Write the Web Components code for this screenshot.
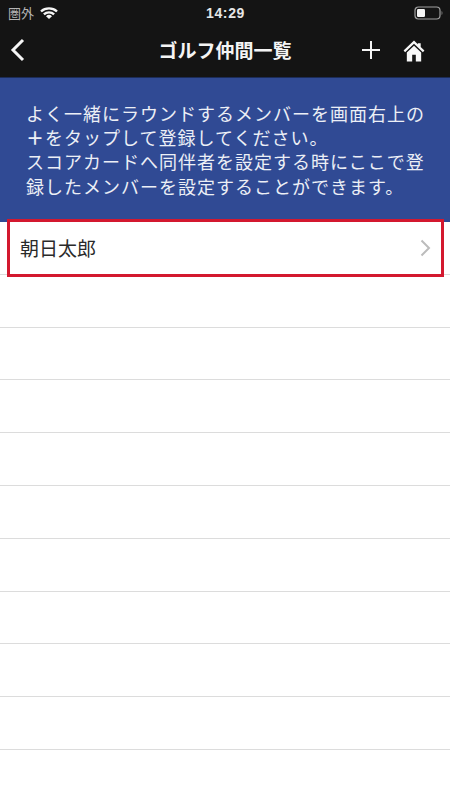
<!DOCTYPE html>
<html lang="ja">
<head>
<meta charset="utf-8">
<title>ゴルフ仲間一覧</title>
<style>
    html, body {
        margin: 0;
        background: #fff;
        font-family: "Liberation Sans", "Noto Sans CJK JP", sans-serif;
    }
    body {
        width: 450px;
        height: 800px;
        overflow: hidden;
    }
    app-screen { height: 800px; }
    info-banner b { font-weight: 700; }
</style>
</head>
<body>
<app-screen>
    <status-bar></status-bar>
    <nav-bar title="ゴルフ仲間一覧"></nav-bar>
    <info-banner>よく一緒にラウンドするメンバーを画面右上の<br><b>＋</b>をタップして登録してください。<br>スコアカードへ同伴者を設定する時にここで登<br>録したメンバーを設定することができます。</info-banner>
    <member-list>
        <member-row highlighted chevron>朝日太郎</member-row>
        <member-row></member-row>
        <member-row></member-row>
        <member-row></member-row>
        <member-row></member-row>
        <member-row></member-row>
        <member-row></member-row>
        <member-row></member-row>
        <member-row></member-row>
        <member-row></member-row>
    </member-list>
</app-screen>

<script>
class AppScreen extends HTMLElement {
    constructor() {
        super()
        this.attachShadow({ mode: 'open' })
        this.shadowRoot.innerHTML = `
            <style>
                :host {
                    display: flex;
                    flex-direction: column;
                    width: 450px;
                    overflow: hidden;
                }
            </style>
            <slot></slot>
        `
    }
}

class StatusBar extends HTMLElement {
    constructor() {
        super()
        this.attachShadow({ mode: 'open' })
        this.shadowRoot.innerHTML = `
            <style>
                :host {
                    display: grid;
                    grid-template-columns: 1fr auto 1fr;
                    align-items: center;
                    height: 25px;
                    padding: 0 7px 0 8px;
                    background: #141414;
                    color: #e8e8e8;
                    font-family: "Liberation Sans", "Noto Sans CJK JP", sans-serif;
                }
                .left { display: flex; align-items: center; gap: 6px; font-size: 13px; color: #b4b4b4; }
                .time { font-size: 14px; font-weight: 700; letter-spacing: .6px; color: #e6e6e6; }
                .right { justify-self: end; display: flex; }
            </style>
            <div class="left">
                <span>圏外</span>
                <svg width="18" height="12" viewBox="0 0 18 13" preserveAspectRatio="none">
                    <path d="M1 4.800a11.500 11.500 0 0 1 16 0" fill="none" stroke="#f6f6f6" stroke-width="2.400"/>
                    <path d="M3.900 8a7.300 7.300 0 0 1 10.200 0" fill="none" stroke="#f6f6f6" stroke-width="2.400"/>
                    <path d="M9 13 6 10a4.200 4.200 0 0 1 6 0z" fill="#f6f6f6"/>
                </svg>
            </div>
            <span class="time">14:29</span>
            <div class="right">
                <svg width="29" height="14" viewBox="0 0 29 14">
                    <rect x="1" y="1" width="25" height="12" rx="3.500" fill="none" stroke="#a0a0a0" stroke-width="1.200"/>
                    <rect x="3" y="3" width="8" height="8" rx="1.200" fill="#f4f4f4"/>
                    <path d="M27.500 5v4a2 2 0 0 0 1-2 2 2 0 0 0-1-2z" fill="#777"/>
                </svg>
            </div>
        `
    }
}

class NavBar extends HTMLElement {
    constructor() {
        super()
        this.attachShadow({ mode: 'open' })
        this.shadowRoot.innerHTML = `
            <style>
                :host {
                    display: grid;
                    grid-template-columns: 110px 1fr 110px;
                    align-items: center;
                    box-sizing: border-box;
                    height: 52px;
                    padding-bottom: 3px;
                    background: #141414;
                    color: #f4f4f4;
                    font-family: "Liberation Sans", "Noto Sans CJK JP", sans-serif;
                }
                h1 {
                    margin: 0;
                    font-size: 19px;
                    font-weight: 700;
                    text-align: center;
                    white-space: nowrap;
                }
                .back { padding-left: 9px; display: flex; }
                .actions { display: flex; align-items: center; justify-content: flex-end; gap: 23px; padding-right: 25px; }
                .home { margin-top: 2px; }
                svg { display: block; }
            </style>
            <div class="back">
                <svg width="16" height="24" viewBox="0 0 16 24">
                    <path d="M14 2 4 12l10 10" fill="none" stroke="#f6f6f6" stroke-width="3"/>
                </svg>
            </div>
            <h1></h1>
            <div class="actions">
                <svg width="18" height="18" viewBox="0 0 18 18">
                    <path d="M9 0v18M0 9h18" stroke="#f6f6f6" stroke-width="2"/>
                </svg>
                <svg class="home" width="22" height="22" viewBox="0 0 23 22">
                    <path d="M11.500 0 .6 10.600l1.600 1.600 9.300-8.800 9.300 8.800 1.600-1.600L18.500 6.800V3h-3v1z" fill="#f8f8f8"/>
                    <path d="M11.500 5.600 4 12.600V22h5.600v-7h3.800v7H19v-9.400z" fill="#f8f8f8"/>
                </svg>
            </div>
        `
        this.shadowRoot.querySelector('h1').textContent = this.getAttribute('title')
    }
}

class InfoBanner extends HTMLElement {
    constructor() {
        super()
        this.attachShadow({ mode: 'open' })
        this.shadowRoot.innerHTML = `
            <style>
                :host {
                    display: block;
                    height: 145px;
                    box-sizing: border-box;
                    padding: 26px 0 0 26px;
                    background: #304a94;
                    color: #eceff6;
                    font-family: "Liberation Sans", "Noto Sans CJK JP", sans-serif;
                    font-size: 18px;
                    line-height: 24.200px;
                    letter-spacing: 1px;
                    white-space: nowrap;
                    box-shadow: inset 0 1px 0 #1c2c58;
                }
            </style>
            <slot></slot>
        `
    }
}

class MemberList extends HTMLElement {
    constructor() {
        super()
        this.attachShadow({ mode: 'open' })
        this.shadowRoot.innerHTML = `
            <style>
                :host {
                    display: grid;
                    grid-auto-rows: 52.800px;
                    background: #fff;
                }
            </style>
            <slot></slot>
        `
    }
}

class MemberRow extends HTMLElement {
    constructor() {
        super()
        this.attachShadow({ mode: 'open' })
        const chevron = this.hasAttribute('chevron') ? `
            <svg width="11" height="18" viewBox="0 0 11 18">
                <path d="M1.500 1.500 9 9l-7.500 7.500" fill="none" stroke="#bcbcbc" stroke-width="2"/>
            </svg>` : ''
        const mark = this.hasAttribute('highlighted') ? '<div class="mark"></div>' : ''
        this.shadowRoot.innerHTML = `
            <style>
                :host {
                    display: flex;
                    position: relative;
                    align-items: center;
                    justify-content: space-between;
                    box-sizing: border-box;
                    padding: 0 19px 0 20px;
                    border-bottom: 1px solid #dcdcdc;
                    color: #2a2a2a;
                    font-family: "Liberation Sans", "Noto Sans CJK JP", sans-serif;
                    font-size: 19px;
                }
                .mark {
                    position: absolute;
                    left: 7px;
                    top: -3px;
                    width: 437px;
                    height: 58px;
                    box-sizing: border-box;
                    border: 3px solid #d3182f;
                }
            </style>
            <span><slot></slot></span>
            ${chevron}
            ${mark}
        `
    }
}

customElements.define('app-screen', AppScreen)
customElements.define('status-bar', StatusBar)
customElements.define('nav-bar', NavBar)
customElements.define('info-banner', InfoBanner)
customElements.define('member-list', MemberList)
customElements.define('member-row', MemberRow)
</script>
</body>
</html>
